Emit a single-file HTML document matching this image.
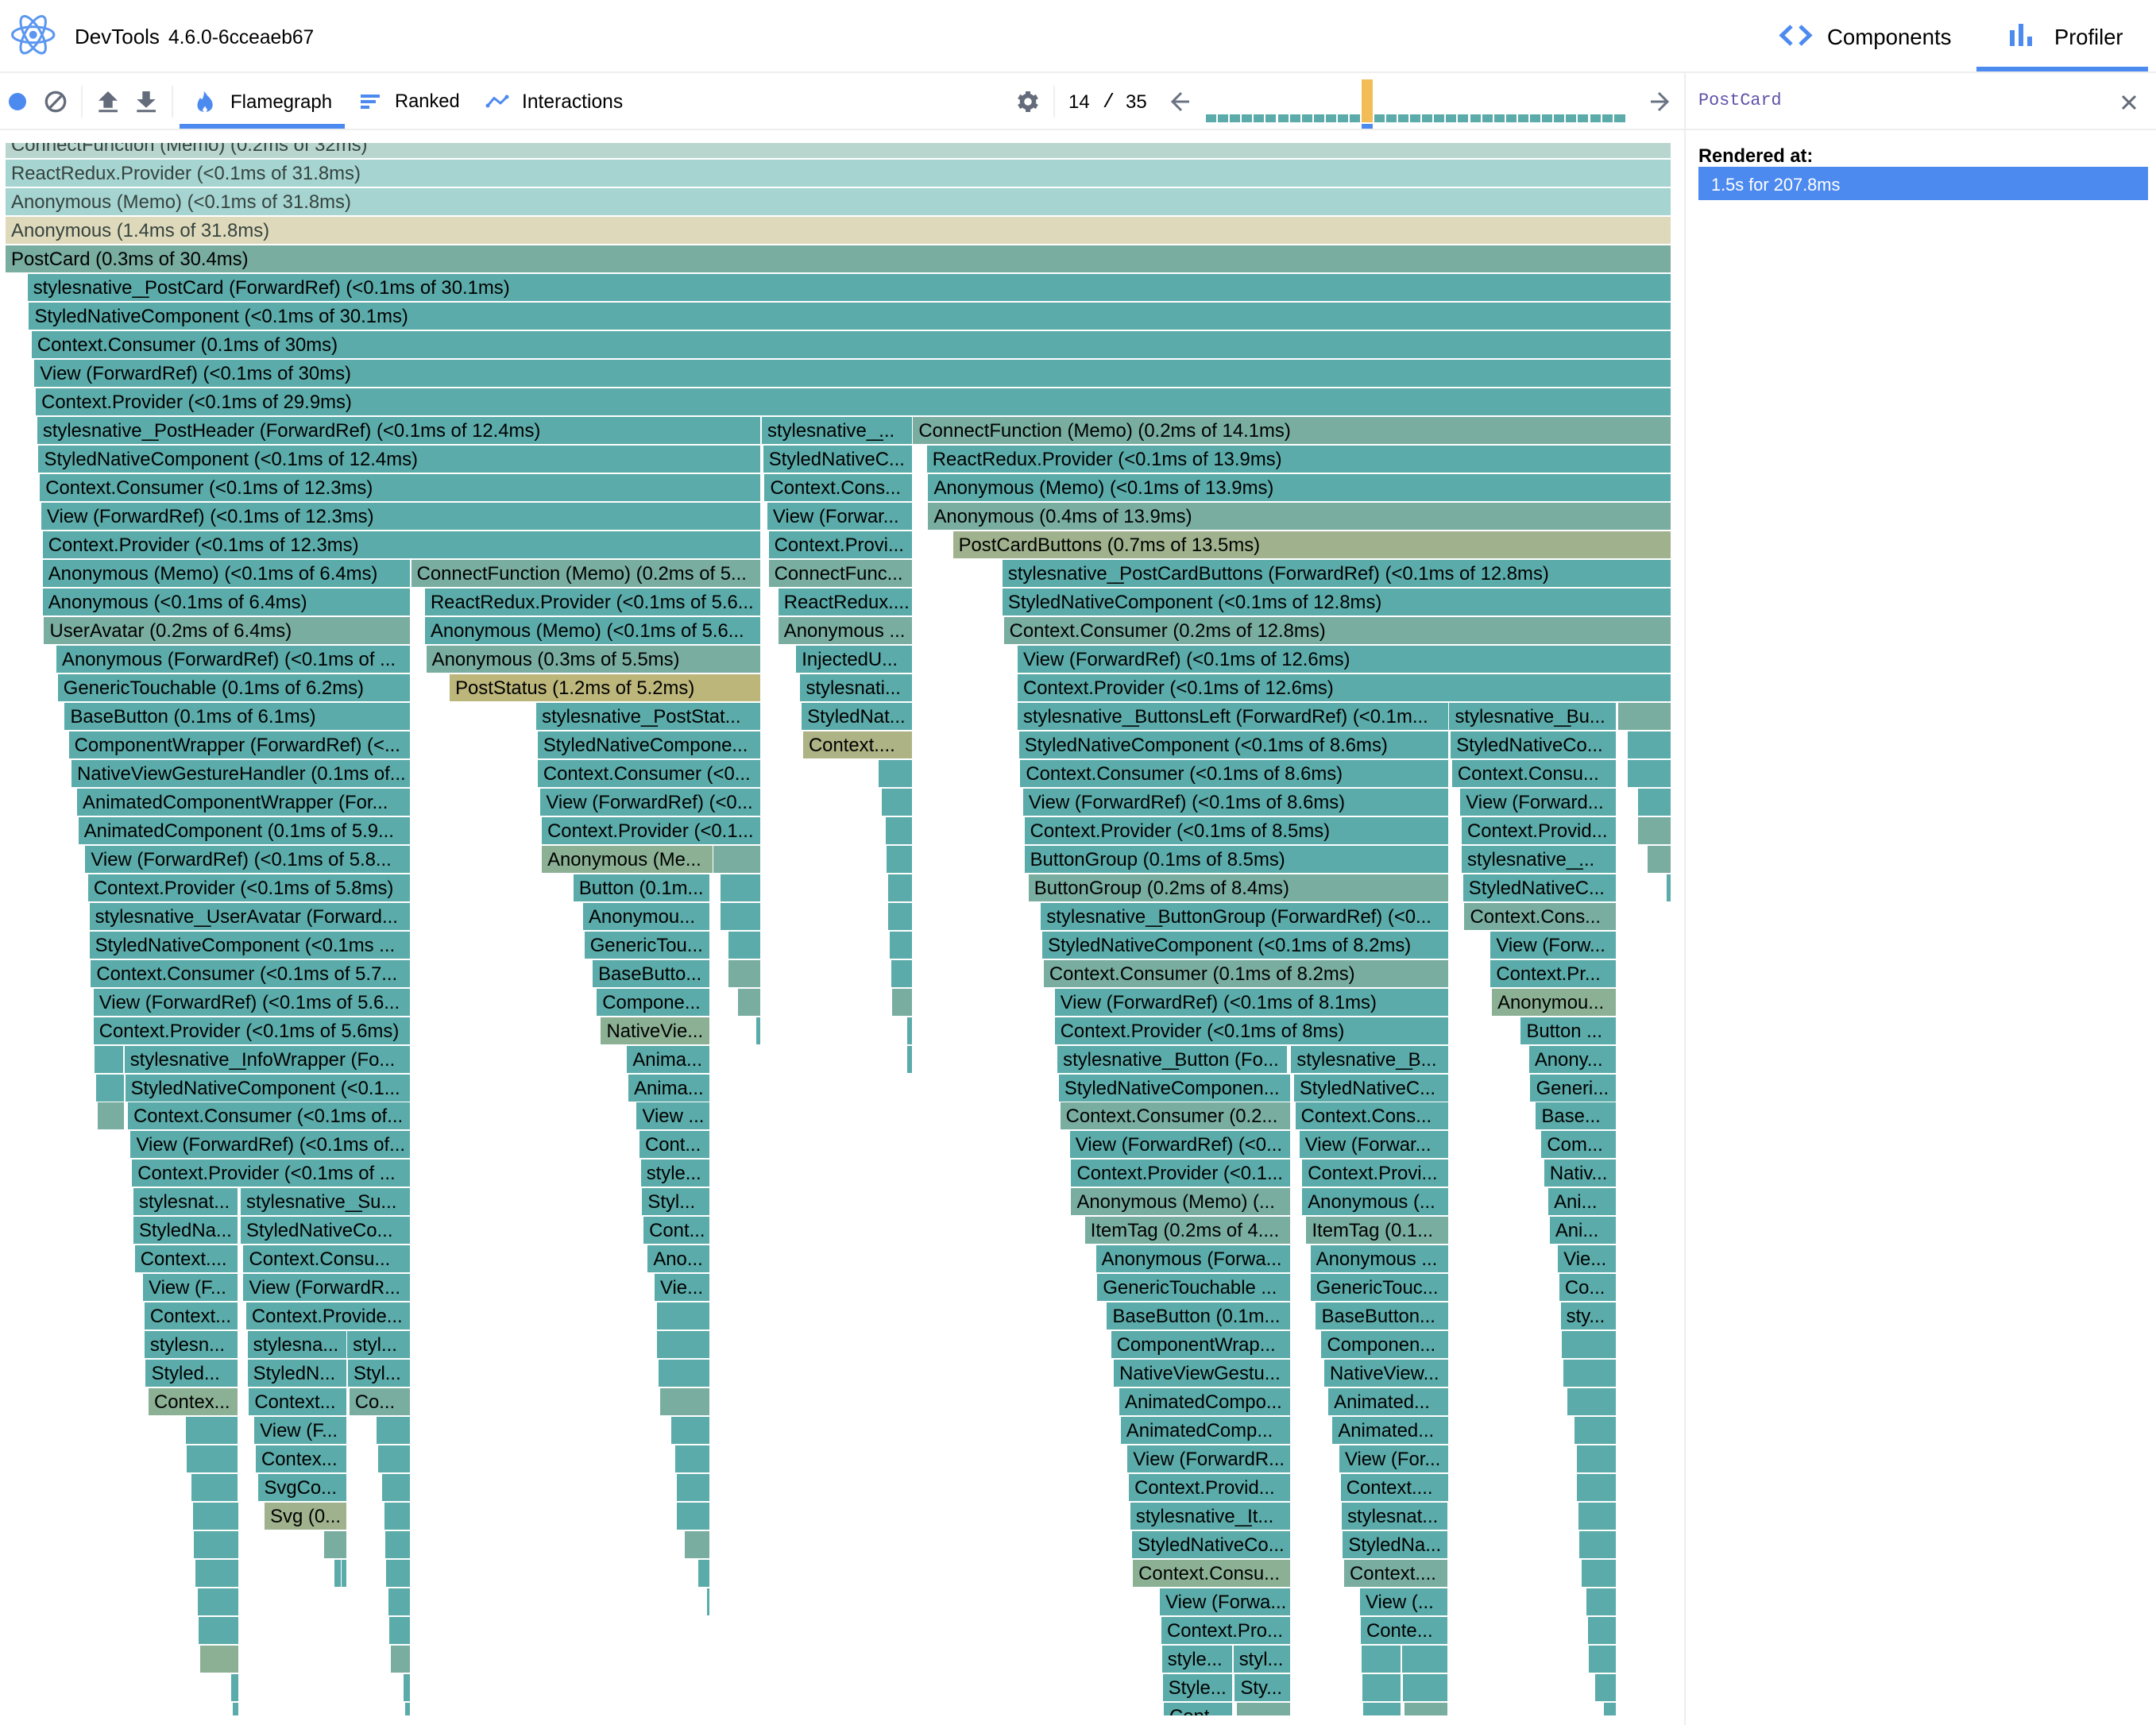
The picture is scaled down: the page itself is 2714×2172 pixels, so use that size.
<!DOCTYPE html>
<html><head><meta charset="utf-8"><title>DevTools</title>
<style>
html,body{margin:0;padding:0;background:#fff}
body{width:2714px;height:2172px;position:relative;overflow:hidden;font-family:"Liberation Sans",sans-serif;color:#000}
.l{position:absolute;background:#eee}
.tx{position:absolute;white-space:nowrap;line-height:1}
svg{position:absolute;left:0;top:0}
#fg{position:absolute;left:0;top:180px;width:2120px;height:1980px;overflow:hidden}
#in{zoom:1.7309;margin-top:-8.666px}
p{margin:0;height:20.7984px;position:relative}
b{position:absolute;top:0;height:19.643px;line-height:20.4px;font-weight:400;font-size:13.8px;padding-left:4.1px;box-sizing:border-box;white-space:nowrap;overflow:hidden;background:#5aaba9;color:#000}
s{text-decoration:none;letter-spacing:-3.2px}
b.g{background:#78ad9f}
b.h{background:#8bb094}
b.k{background:#9fb28d}
b.j{background:#adb384}
b.y{background:#bcb67b}
b.a{background:#b9d6ce;color:#36433f}
b.c{background:#a5d4d1;color:#36433f}
b.d{background:#ded9bb;color:#36433f}
</style></head><body>
<div class="l" style="left:0;top:90px;width:2714px;height:2px"></div>
<div class="l" style="left:0;top:162px;width:2714px;height:2px"></div>
<div class="l" style="left:2120px;top:92px;width:2px;height:2080px"></div>
<div class="l" style="left:102px;top:108px;width:2px;height:40px"></div>
<div class="l" style="left:216px;top:108px;width:2px;height:40px"></div>
<div class="l" style="left:1326px;top:108px;width:2px;height:40px"></div>
<div style="position:absolute;left:2488px;top:84px;width:216px;height:6px;background:#4d8af0"></div>
<div style="position:absolute;left:226px;top:156px;width:208px;height:6px;background:#4d8af0"></div>
<svg width="2714" height="170" viewBox="0 0 2714 170" fill="none">
<g stroke="#5b97f0" stroke-width="3">
<ellipse cx="41.700" cy="43.700" rx="26.200" ry="10"/>
<ellipse cx="41.700" cy="43.700" rx="26.200" ry="10" transform="rotate(60 41.700 43.700)"/>
<ellipse cx="41.700" cy="43.700" rx="26.200" ry="10" transform="rotate(120 41.700 43.700)"/>
</g>
<circle cx="41.700" cy="43.700" r="5" fill="#5b97f0"/>
<path d="M2255 33l-12 11.500 12 11.500M2266 33l12 11.500-12 11.500" stroke="#4d8af0" stroke-width="5"/>
<path d="M2530 38h6v20h-6zM2541 30h6v28h-6zM2552 46h6v12h-6z" fill="#4d8af0"/>
<circle cx="22" cy="128" r="11" fill="#4d8af0"/>
<circle cx="70" cy="128" r="11.700" stroke="#646b7a" stroke-width="3.300"/>
<path d="M62 136.500l16.500-17" stroke="#646b7a" stroke-width="3.300"/>
<path d="M136 115l12 11.700h-6.300v9h-11.400v-9h-6.300zM124.300 138.300h23.700v3h-23.700z" fill="#646b7a"/>
<path d="M179.300 115h9.400v10h7l-11.700 10.700-11.700-10.700h7zM172.300 138.300h23.700v3h-23.700z" fill="#646b7a"/>
<path d="M256.500 115c1 4-1 8-2 10c-1 0-2-1-2.500-2c-2 3-3.500 6-3.500 10c0 5 4 8 9.500 8s9.700-3.500 9.700-9c0-6-5-10-7-12c-.5-1-1.500-3-4.200-5z" fill="#4d8af0"/>
<path d="M258 133.500c1 2 2.800 3.500 2.800 5c0 1.500-1.300 2.500-2.800 2.500c-1.500 0-2.800-1-2.800-2.500c0-1.500 1.800-3 2.800-5z" fill="#fff"/>
<path d="M454 119h24v4h-24zM454 126h19v4h-19zM454 133h11v4h-11z" fill="#4d8af0"/>
<path d="M614 133l8-9.500 8 6.500 8-8" stroke="#4d8af0" stroke-width="3" stroke-linejoin="round" stroke-linecap="round"/>
<circle cx="614" cy="133" r="2.500" fill="#4d8af0"/><circle cx="638" cy="122" r="2.500" fill="#4d8af0"/>
<circle cx="1294" cy="128" r="7.500" stroke="#646b7a" stroke-width="5.500"/>
<path d="M1294 115v5M1294 136v5M1282.700 121.500l4.300 2.500M1301 132l4.300 2.500M1282.700 134.500l4.300-2.500M1301 124l4.300-2.500" stroke="#646b7a" stroke-width="6"/>
<path d="M1487 117l-11 11 11 11M1476 128h21" stroke="#6a7283" stroke-width="3"/>
<path d="M2088 117l11 11-11 11M2099 128h-21" stroke="#6a7283" stroke-width="3"/>
<path d="M2672 121l16 16M2688 121l-16 16" stroke="#646b7a" stroke-width="3"/>
<g fill="#5aaba9">
<rect x="1518" y="144" width="13" height="10"/><rect x="1533" y="144" width="13" height="10"/><rect x="1548" y="144" width="13" height="10"/><rect x="1563" y="144" width="13" height="10"/><rect x="1578" y="144" width="13" height="10"/><rect x="1593" y="144" width="13" height="10"/><rect x="1609" y="144" width="13" height="10"/><rect x="1624" y="144" width="13" height="10"/><rect x="1639" y="144" width="13" height="10"/><rect x="1654" y="144" width="13" height="10"/><rect x="1669" y="144" width="13" height="10"/><rect x="1684" y="144" width="13" height="10"/><rect x="1699" y="144" width="13" height="10"/>
<rect x="1730" y="144" width="13" height="10"/><rect x="1745" y="144" width="13" height="10"/><rect x="1760" y="144" width="13" height="10"/><rect x="1775" y="144" width="13" height="10"/><rect x="1790" y="144" width="13" height="10"/><rect x="1805" y="144" width="13" height="10"/><rect x="1820" y="144" width="13" height="10"/><rect x="1835" y="144" width="13" height="10"/><rect x="1851" y="144" width="13" height="10"/><rect x="1866" y="144" width="13" height="10"/><rect x="1881" y="144" width="13" height="10"/><rect x="1896" y="144" width="13" height="10"/><rect x="1911" y="144" width="13" height="10"/><rect x="1926" y="144" width="13" height="10"/><rect x="1941" y="144" width="13" height="10"/><rect x="1956" y="144" width="13" height="10"/><rect x="1971" y="144" width="13" height="10"/><rect x="1986" y="144" width="13" height="10"/><rect x="2002" y="144" width="13" height="10"/><rect x="2017" y="144" width="13" height="10"/><rect x="2032" y="144" width="14" height="10"/>
</g>
<rect x="1714" y="100" width="14" height="54" fill="#f2bc57"/>
<rect x="1714" y="156" width="14" height="6" fill="#4d8af0"/>
</svg>
<div class="tx" style="left:94px;top:33px;font-size:26px">DevTools</div>
<div class="tx" style="left:212px;top:36px;font-size:24.600px">4.6.0-6cceaeb67</div>
<div class="tx" style="left:2300px;top:33px;font-size:27.600px">Components</div>
<div class="tx" style="left:2586px;top:33px;font-size:27.300px">Profiler</div>
<div class="tx" style="left:290px;top:117px;font-size:24px">Flamegraph</div>
<div class="tx" style="left:497px;top:117px;font-size:23.700px">Ranked</div>
<div class="tx" style="left:657px;top:117px;font-size:24.600px">Interactions</div>
<div class="tx" style="left:1345px;top:117px;font-size:24px">14</div>
<div class="tx" style="left:1388px;top:116px;font-size:25px;font-family:'Liberation Mono',monospace">/</div>
<div class="tx" style="left:1417px;top:117px;font-size:24px">35</div>
<div class="tx" style="left:2138px;top:116px;font-size:21.800px;font-family:'Liberation Mono',monospace;color:#5f53a8">PostCard</div>
<div class="tx" style="left:2138px;top:186px;font-size:23.600px;font-weight:700">Rendered at:</div>
<div style="position:absolute;left:2138px;top:210px;width:566px;height:42px;background:#4d8af0"></div>
<div class="tx" style="left:2154px;top:222px;font-size:21.800px;color:#fff">1.5s for 207.8ms</div>
<div id="fg"><div id="in">
<p><b class="a" style="left:4px;width:1211px">ConnectFunction (Memo) (0.2ms of 32ms)</b></p>
<p><b class="c" style="left:4px;width:1211px">ReactRedux.Provider (&lt;0.1ms of 31.8ms)</b></p>
<p><b class="c" style="left:4px;width:1211px">Anonymous (Memo) (&lt;0.1ms of 31.8ms)</b></p>
<p><b class="d" style="left:4px;width:1211px">Anonymous (1.4ms of 31.8ms)</b></p>
<p><b class="g" style="left:4px;width:1211px">PostCard (0.3ms of 30.4ms)</b></p>
<p><b style="left:20px;width:1195px">stylesnative<s>__</s>PostCard (ForwardRef) (&lt;0.1ms of 30.1ms)</b></p>
<p><b style="left:21px;width:1194px">StyledNativeComponent (&lt;0.1ms of 30.1ms)</b></p>
<p><b style="left:23px;width:1192px">Context.Consumer (0.1ms of 30ms)</b></p>
<p><b style="left:25px;width:1190px">View (ForwardRef) (&lt;0.1ms of 30ms)</b></p>
<p><b style="left:26px;width:1189px">Context.Provider (&lt;0.1ms of 29.9ms)</b></p>
<p><b style="left:27px;width:526px">stylesnative<s>__</s>PostHeader (ForwardRef) (&lt;0.1ms of 12.4ms)</b><b style="left:554px;width:109px">stylesnative<s>__</s>...</b><b class="g" style="left:664px;width:551px">ConnectFunction (Memo) (0.2ms of 14.1ms)</b></p>
<p><b style="left:28px;width:525px">StyledNativeComponent (&lt;0.1ms of 12.4ms)</b><b style="left:555px;width:108px">StyledNativeC...</b><b style="left:674px;width:541px">ReactRedux.Provider (&lt;0.1ms of 13.9ms)</b></p>
<p><b style="left:29px;width:524px">Context.Consumer (&lt;0.1ms of 12.3ms)</b><b style="left:556px;width:107px">Context.Cons...</b><b style="left:675px;width:540px">Anonymous (Memo) (&lt;0.1ms of 13.9ms)</b></p>
<p><b style="left:30px;width:523px">View (ForwardRef) (&lt;0.1ms of 12.3ms)</b><b style="left:558px;width:105px">View (Forwar...</b><b class="g" style="left:675px;width:540px">Anonymous (0.4ms of 13.9ms)</b></p>
<p><b style="left:31px;width:522px">Context.Provider (&lt;0.1ms of 12.3ms)</b><b style="left:559px;width:104px">Context.Provi...</b><b class="k" style="left:693px;width:522px">PostCardButtons (0.7ms of 13.5ms)</b></p>
<p><b style="left:31px;width:267px">Anonymous (Memo) (&lt;0.1ms of 6.4ms)</b><b class="g" style="left:299px;width:254px">ConnectFunction (Memo) (0.2ms of 5...</b><b class="g" style="left:559px;width:104px">ConnectFunc...</b><b style="left:729px;width:486px">stylesnative<s>__</s>PostCardButtons (ForwardRef) (&lt;0.1ms of 12.8ms)</b></p>
<p><b style="left:31px;width:267px">Anonymous (&lt;0.1ms of 6.4ms)</b><b style="left:309px;width:244px">ReactRedux.Provider (&lt;0.1ms of 5.6...</b><b style="left:566px;width:97px">ReactRedux....</b><b style="left:729px;width:486px">StyledNativeComponent (&lt;0.1ms of 12.8ms)</b></p>
<p><b class="g" style="left:32px;width:266px">UserAvatar (0.2ms of 6.4ms)</b><b style="left:309px;width:244px">Anonymous (Memo) (&lt;0.1ms of 5.6...</b><b class="g" style="left:566px;width:97px">Anonymous ...</b><b class="g" style="left:730px;width:485px">Context.Consumer (0.2ms of 12.8ms)</b></p>
<p><b style="left:41px;width:257px">Anonymous (ForwardRef) (&lt;0.1ms of ...</b><b class="g" style="left:310px;width:243px">Anonymous (0.3ms of 5.5ms)</b><b style="left:579px;width:84px">InjectedU...</b><b style="left:740px;width:475px">View (ForwardRef) (&lt;0.1ms of 12.6ms)</b></p>
<p><b style="left:42px;width:256px">GenericTouchable (0.1ms of 6.2ms)</b><b class="y" style="left:327px;width:226px">PostStatus (1.2ms of 5.2ms)</b><b style="left:582px;width:81px">stylesnati...</b><b style="left:740px;width:475px">Context.Provider (&lt;0.1ms of 12.6ms)</b></p>
<p><b style="left:47px;width:251px">BaseButton (0.1ms of 6.1ms)</b><b style="left:390px;width:163px">stylesnative<s>__</s>PostStat...</b><b style="left:583px;width:80px">StyledNat...</b><b style="left:740px;width:313px">stylesnative<s>__</s>ButtonsLeft (ForwardRef) (&lt;0.1m...</b><b style="left:1054px;width:121px">stylesnative<s>__</s>Bu...</b><b class="g" style="left:1177px;width:38px"></b></p>
<p><b style="left:50px;width:248px">ComponentWrapper (ForwardRef) (&lt;...</b><b style="left:391px;width:162px">StyledNativeCompone...</b><b class="j" style="left:584px;width:79px">Context....</b><b style="left:741px;width:312px">StyledNativeComponent (&lt;0.1ms of 8.6ms)</b><b style="left:1055px;width:120px">StyledNativeCo...</b><b style="left:1184px;width:31px"></b></p>
<p><b style="left:52px;width:246px">NativeViewGestureHandler (0.1ms of...</b><b style="left:391px;width:162px">Context.Consumer (&lt;0...</b><b style="left:639px;width:24px"></b><b style="left:742px;width:311px">Context.Consumer (&lt;0.1ms of 8.6ms)</b><b style="left:1056px;width:119px">Context.Consu...</b><b style="left:1184px;width:31px"></b></p>
<p><b style="left:56px;width:242px">AnimatedComponentWrapper (For...</b><b style="left:393px;width:160px">View (ForwardRef) (&lt;0...</b><b style="left:641px;width:22px"></b><b style="left:744px;width:309px">View (ForwardRef) (&lt;0.1ms of 8.6ms)</b><b style="left:1062px;width:113px">View (Forward...</b><b style="left:1191px;width:24px"></b></p>
<p><b style="left:57px;width:241px">AnimatedComponent (0.1ms of 5.9...</b><b style="left:394px;width:159px">Context.Provider (&lt;0.1...</b><b style="left:644px;width:19px"></b><b style="left:745px;width:308px">Context.Provider (&lt;0.1ms of 8.5ms)</b><b style="left:1063px;width:112px">Context.Provid...</b><b class="g" style="left:1191px;width:24px"></b></p>
<p><b style="left:62px;width:236px">View (ForwardRef) (&lt;0.1ms of 5.8...</b><b class="h" style="left:394px;width:124px">Anonymous (Me...</b><b class="g" style="left:519px;width:34px"></b><b style="left:645px;width:18px"></b><b style="left:745px;width:308px">ButtonGroup (0.1ms of 8.5ms)</b><b style="left:1063px;width:112px">stylesnative<s>__</s>...</b><b class="g" style="left:1198px;width:17px"></b></p>
<p><b style="left:64px;width:234px">Context.Provider (&lt;0.1ms of 5.8ms)</b><b style="left:417px;width:99px">Button (0.1m...</b><b style="left:524px;width:29px"></b><b style="left:646px;width:17px"></b><b class="g" style="left:748px;width:305px">ButtonGroup (0.2ms of 8.4ms)</b><b style="left:1064px;width:111px">StyledNativeC...</b><b style="left:1212px;width:3px;padding:0"></b></p>
<p><b style="left:65px;width:233px">stylesnative<s>__</s>UserAvatar (Forward...</b><b style="left:424px;width:92px">Anonymou...</b><b style="left:524px;width:29px"></b><b style="left:646px;width:17px"></b><b style="left:757px;width:296px">stylesnative<s>__</s>ButtonGroup (ForwardRef) (&lt;0...</b><b class="g" style="left:1065px;width:110px">Context.Cons...</b></p>
<p><b style="left:65px;width:233px">StyledNativeComponent (&lt;0.1ms ...</b><b style="left:425px;width:91px">GenericTou...</b><b style="left:530px;width:23px"></b><b style="left:647px;width:16px"></b><b style="left:758px;width:295px">StyledNativeComponent (&lt;0.1ms of 8.2ms)</b><b style="left:1084px;width:91px">View (Forw...</b></p>
<p><b style="left:66px;width:232px">Context.Consumer (&lt;0.1ms of 5.7...</b><b style="left:431px;width:85px">BaseButto...</b><b class="g" style="left:530px;width:23px"></b><b style="left:648px;width:15px"></b><b class="g" style="left:759px;width:294px">Context.Consumer (0.1ms of 8.2ms)</b><b style="left:1084px;width:91px">Context.Pr...</b></p>
<p><b style="left:68px;width:230px">View (ForwardRef) (&lt;0.1ms of 5.6...</b><b style="left:434px;width:82px">Compone...</b><b class="g" style="left:537px;width:16px"></b><b class="g" style="left:649px;width:14px"></b><b style="left:767px;width:286px">View (ForwardRef) (&lt;0.1ms of 8.1ms)</b><b class="h" style="left:1085px;width:90px">Anonymou...</b></p>
<p><b style="left:68px;width:230px">Context.Provider (&lt;0.1ms of 5.6ms)</b><b class="h" style="left:437px;width:79px">NativeVie...</b><b style="left:550px;width:3px;padding:0"></b><b style="left:660px;width:3px;padding:0"></b><b style="left:767px;width:286px">Context.Provider (&lt;0.1ms of 8ms)</b><b style="left:1106px;width:69px">Button ...</b></p>
<p><b style="left:69px;width:20.500px"></b><b style="left:90.500px;width:207.500px">stylesnative<s>__</s>InfoWrapper (Fo...</b><b style="left:456px;width:60px">Anima...</b><b style="left:660px;width:3px;padding:0"></b><b style="left:769px;width:167px">stylesnative<s>__</s>Button (Fo...</b><b style="left:939px;width:114px">stylesnative<s>__</s>B...</b><b style="left:1112px;width:63px">Anony...</b></p>
<p><b style="left:70px;width:20px"></b><b style="left:91px;width:207px">StyledNativeComponent (&lt;0.1...</b><b style="left:457px;width:59px">Anima...</b><b style="left:770px;width:168px">StyledNativeComponen...</b><b style="left:941px;width:112px">StyledNativeC...</b><b style="left:1113px;width:62px">Generi...</b></p>
<p><b class="g" style="left:71px;width:19px"></b><b style="left:93px;width:205px">Context.Consumer (&lt;0.1ms of...</b><b style="left:463px;width:53px">View ...</b><b class="g" style="left:771px;width:167.500px">Context.Consumer (0.2...</b><b style="left:942px;width:111px">Context.Cons...</b><b style="left:1117px;width:58px">Base...</b></p>
<p><b style="left:95px;width:203px">View (ForwardRef) (&lt;0.1ms of...</b><b style="left:465px;width:51px">Cont...</b><b style="left:778px;width:160.500px">View (ForwardRef) (&lt;0...</b><b style="left:945px;width:108px">View (Forwar...</b><b style="left:1121px;width:54px">Com...</b></p>
<p><b style="left:96px;width:202px">Context.Provider (&lt;0.1ms of ...</b><b style="left:466px;width:50px">style...</b><b style="left:779px;width:159.500px">Context.Provider (&lt;0.1...</b><b style="left:947px;width:106px">Context.Provi...</b><b style="left:1123px;width:52px">Nativ...</b></p>
<p><b style="left:97px;width:75.500px">stylesnat...</b><b style="left:175px;width:123px">stylesnative<s>__</s>Su...</b><b style="left:467px;width:49px">Styl...</b><b class="g" style="left:779px;width:159.500px">Anonymous (Memo) (...</b><b style="left:947px;width:106px">Anonymous (...</b><b style="left:1126px;width:49px">Ani...</b></p>
<p><b style="left:97px;width:75.500px">StyledNa...</b><b style="left:175px;width:123px">StyledNativeCo...</b><b style="left:468px;width:48px">Cont...</b><b class="g" style="left:789px;width:149.500px">ItemTag (0.2ms of 4....</b><b class="g" style="left:950px;width:103px">ItemTag (0.1...</b><b style="left:1127px;width:48px">Ani...</b></p>
<p><b style="left:98px;width:74.500px">Context....</b><b style="left:177px;width:121px">Context.Consu...</b><b style="left:471px;width:45px">Ano...</b><b style="left:797px;width:141.500px">Anonymous (Forwa...</b><b style="left:953px;width:100px">Anonymous ...</b><b style="left:1133px;width:42px">Vie...</b></p>
<p><b style="left:104px;width:68.500px">View (F...</b><b style="left:177px;width:121px">View (ForwardR...</b><b style="left:476px;width:40px">Vie...</b><b style="left:798px;width:140.500px">GenericTouchable ...</b><b style="left:953px;width:100px">GenericTouc...</b><b style="left:1134px;width:41px">Co...</b></p>
<p><b style="left:105px;width:67.500px">Context...</b><b style="left:179px;width:119px">Context.Provide...</b><b style="left:478px;width:38px"></b><b style="left:805px;width:133.500px">BaseButton (0.1m...</b><b style="left:957px;width:96px">BaseButton...</b><b style="left:1135px;width:40px">sty...</b></p>
<p><b style="left:105px;width:67.500px">stylesn...</b><b style="left:180px;width:72px">stylesna...</b><b style="left:252.500px;width:45.500px">styl...</b><b style="left:478px;width:38px"></b><b style="left:808px;width:130.500px">ComponentWrap...</b><b style="left:961px;width:92px">Componen...</b><b style="left:1136px;width:39px"></b></p>
<p><b style="left:106px;width:66.500px">Styled...</b><b style="left:180px;width:72px">StyledN...</b><b style="left:253px;width:45px">Styl...</b><b style="left:479px;width:37px"></b><b style="left:810px;width:128.500px">NativeViewGestu...</b><b style="left:963px;width:90px">NativeView...</b><b style="left:1137px;width:38px"></b></p>
<p><b class="h" style="left:108px;width:64.500px">Contex...</b><b style="left:181px;width:71px">Context...</b><b class="g" style="left:254px;width:44px">Co...</b><b class="g" style="left:480px;width:36px"></b><b style="left:814px;width:124.500px">AnimatedCompo...</b><b style="left:966px;width:87px">Animated...</b><b style="left:1140px;width:35px"></b></p>
<p><b style="left:135px;width:37.500px"></b><b style="left:185px;width:67px">View (F...</b><b style="left:274px;width:24px"></b><b style="left:488px;width:28px"></b><b style="left:815px;width:123.500px">AnimatedComp...</b><b style="left:969px;width:84px">Animated...</b><b style="left:1145px;width:30px"></b></p>
<p><b style="left:136px;width:36.500px"></b><b style="left:186px;width:66px">Contex...</b><b style="left:275px;width:23px"></b><b style="left:491px;width:25px"></b><b style="left:820px;width:118.500px">View (ForwardR...</b><b style="left:974px;width:79px">View (For...</b><b style="left:1147px;width:28px"></b></p>
<p><b style="left:139px;width:33.500px"></b><b style="left:188px;width:64px">SvgCo...</b><b style="left:278px;width:20px"></b><b style="left:492px;width:24px"></b><b style="left:821px;width:117.500px">Context.Provid...</b><b style="left:975px;width:78px">Context....</b><b style="left:1147px;width:28px"></b></p>
<p><b style="left:140.300px;width:33px"></b><b class="k" style="left:192.400px;width:59.300px">Svg (0...</b><b style="left:279.800px;width:18.100px"></b><b style="left:492px;width:24px"></b><b style="left:822px;width:116.500px">stylesnative<s>__</s>It...</b><b style="left:975.800px;width:77px">stylesnat...</b><b style="left:1147.800px;width:27.200px"></b></p>
<p><b style="left:141px;width:32.300px"></b><b class="g" style="left:235.700px;width:16px"></b><b style="left:280px;width:17.900px"></b><b class="g" style="left:498px;width:18px"></b><b style="left:823.300px;width:115.200px">StyledNativeCo...</b><b style="left:976.500px;width:76.300px">StyledNa...</b><b style="left:1148.600px;width:26.400px"></b></p>
<p><b style="left:142.300px;width:31px"></b><b style="left:243px;width:4.600px;padding:0"></b><b style="left:248.600px;width:3.100px;padding:0"></b><b style="left:281px;width:16.900px"></b><b style="left:508px;width:8px;padding:0"></b><b class="h" style="left:823.900px;width:114.600px">Context.Consu...</b><b class="g" style="left:977.500px;width:75.300px">Context....</b><b style="left:1150px;width:25px"></b></p>
<p><b style="left:143.700px;width:29.600px"></b><b style="left:282.400px;width:15.500px"></b><b style="left:514px;width:2px;padding:0"></b><b style="left:843.500px;width:95px">View (Forwa...</b><b style="left:989px;width:63.700px">View (...</b><b style="left:1153.700px;width:21.300px"></b></p>
<p><b style="left:144.400px;width:28.900px"></b><b style="left:283px;width:14.900px"></b><b style="left:844.600px;width:93.900px">Context.Pro...</b><b style="left:989.600px;width:63.100px">Conte...</b><b style="left:1154.900px;width:20.100px"></b></p>
<p><b class="h" style="left:145.500px;width:27.800px"></b><b class="g" style="left:284.500px;width:13.400px"></b><b style="left:845px;width:51px">style...</b><b style="left:897px;width:41.500px">styl...</b><b style="left:990.300px;width:28.100px"></b><b style="left:1019.500px;width:33.200px"></b><b style="left:1155.500px;width:19.500px"></b></p>
<p><b style="left:168.400px;width:4.900px;padding:0"></b><b style="left:293.500px;width:4.400px;padding:0"></b><b style="left:845.600px;width:50.400px">Style...</b><b style="left:898px;width:40.500px">Sty...</b><b style="left:990.900px;width:27.500px"></b><b style="left:1020px;width:32.700px"></b><b style="left:1160px;width:15px"></b></p>
<p><b style="left:169.200px;width:4.100px;padding:0"></b><b style="left:294.500px;width:3.400px;padding:0"></b><b style="left:846.300px;width:49.700px">Cont...</b><b class="g" style="left:899.600px;width:38.900px"></b><b style="left:991.500px;width:26.900px"></b><b class="g" style="left:1021.500px;width:31.200px"></b><b style="left:1166.600px;width:8.400px;padding:0"></b></p>
</div></div>
</body></html>
